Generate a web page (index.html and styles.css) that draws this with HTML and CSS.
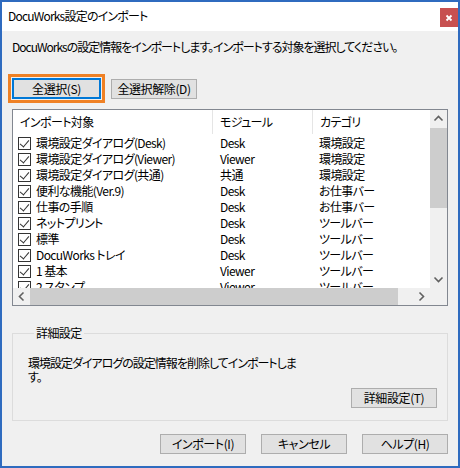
FILE: index.html
```html
<!DOCTYPE html>
<html lang="ja">
<head>
<meta charset="utf-8">
<title>DocuWorks設定のインポート</title>
<link rel="stylesheet" href="styles.css">
</head>
<body>
<div class="window">
  <div class="titlebar">
    <span class="title">DocuWorks設定のインポート</span>
    <div class="close"><svg width="18" height="19" viewBox="0 0 18 19"><path d="M6.5 7.5 L11.5 12.5 M11.5 7.5 L6.5 12.5" stroke="#fff" stroke-width="1.8" fill="none"/></svg></div>
  </div>
  <div class="client">
    <p class="desc">DocuWorksの設定情報をインポートします。インポートする対象を選択してください。</p>
    <div class="btnrow">
      <button class="btn btn-focus">全選択(S)</button>
      <button class="btn">全選択解除(D)</button>
    </div>
    <div class="listbox">
      <div class="viewport">
        <div class="lrow lhead">
          <div class="c1 hc">インポート対象</div>
          <div class="c2 hc">モジュール</div>
          <div class="c3 hc">カテゴリ</div>
        </div>
        <div class="lrow"><div class="c1"><span class="cb"></span>環境設定ダイアログ(Desk)</div><div class="c2">Desk</div><div class="c3">環境設定</div></div>
        <div class="lrow"><div class="c1"><span class="cb"></span>環境設定ダイアログ(Viewer)</div><div class="c2">Viewer</div><div class="c3">環境設定</div></div>
        <div class="lrow"><div class="c1"><span class="cb"></span>環境設定ダイアログ(共通)</div><div class="c2">共通</div><div class="c3">環境設定</div></div>
        <div class="lrow"><div class="c1"><span class="cb"></span>便利な機能(Ver.9)</div><div class="c2">Desk</div><div class="c3">お仕事バー</div></div>
        <div class="lrow"><div class="c1"><span class="cb"></span>仕事の手順</div><div class="c2">Desk</div><div class="c3">お仕事バー</div></div>
        <div class="lrow"><div class="c1"><span class="cb"></span>ネットプリント</div><div class="c2">Desk</div><div class="c3">ツールバー</div></div>
        <div class="lrow"><div class="c1"><span class="cb"></span>標準</div><div class="c2">Desk</div><div class="c3">ツールバー</div></div>
        <div class="lrow"><div class="c1"><span class="cb"></span>DocuWorks トレイ</div><div class="c2">Desk</div><div class="c3">ツールバー</div></div>
        <div class="lrow"><div class="c1"><span class="cb"></span>1 基本</div><div class="c2">Viewer</div><div class="c3">ツールバー</div></div>
        <div class="lrow"><div class="c1"><span class="cb"></span>2 スタンプ</div><div class="c2">Viewer</div><div class="c3">ツールバー</div></div>
      </div>
      <div class="vscroll">
        <div class="arrow"><svg width="17" height="17" viewBox="0 0 17 17"><path d="M4.5 10.5 L8.5 6.5 L12.5 10.5" stroke="#606060" stroke-width="1.6" fill="none"/></svg></div>
        <div class="vthumb"></div>
        <div class="vtrack"></div>
        <div class="arrow"><svg width="17" height="17" viewBox="0 0 17 17"><path d="M4.5 6.5 L8.5 10.5 L12.5 6.5" stroke="#606060" stroke-width="1.6" fill="none"/></svg></div>
      </div>
      <div class="hscroll">
        <div class="arrow"><svg width="17" height="17" viewBox="0 0 17 17"><path d="M10.5 4.5 L6.5 8.5 L10.5 12.5" stroke="#606060" stroke-width="1.6" fill="none"/></svg></div>
        <div class="hthumb"></div>
        <div class="htrack"></div>
        <div class="arrow"><svg width="17" height="17" viewBox="0 0 17 17"><path d="M6.5 4.5 L10.5 8.5 L6.5 12.5" stroke="#606060" stroke-width="1.6" fill="none"/></svg></div>
      </div>
      <div class="corner"></div>
    </div>
    <fieldset class="group">
      <legend>詳細設定</legend>
      <p class="gtext">環境設定ダイアログの設定情報を削除してインポートしま<br>す。</p>
      <div class="gactions"><button class="btn">詳細設定(T)</button></div>
    </fieldset>
    <div class="footer">
      <button class="btn">インポート(I)</button>
      <button class="btn">キャンセル</button>
      <button class="btn">ヘルプ(H)</button>
    </div>
  </div>
</div>
</body>
</html>
```
FILE: styles.css
```css
* { box-sizing: border-box; }
html, body { margin: 0; padding: 0; background: #f0f0f0; }
body {
  font-family: "Noto Sans CJK JP", "Noto Sans", sans-serif;
  font-size: 12px;
  color: #000;
  font-feature-settings: "palt";
}
.window {
  width: 460px;
  height: 468px;
  border: 2px solid #2f6bbf;
  background: #f0f0f0;
  display: flex;
  flex-direction: column;
}
.titlebar {
  height: 29px;
  background: #fff;
  display: flex;
  align-items: flex-start;
  justify-content: space-between;
  padding-left: 6px;
}
.title { line-height: 16px; margin-top: 6px; font-size: 12px; letter-spacing: -0.8px; }
.close {
  width: 18px;
  height: 19px;
  margin-top: 6px;
  background: #c75050;
  display: flex;
}
.client { padding: 8px 10px 0 10px; flex: 1; }
.desc { margin: 0; line-height: 16px; letter-spacing: -1px; }
.btnrow {
  display: flex;
  align-items: flex-start;
  gap: 10px;
  margin-top: 23px;
  height: 31px;
}
.btn {
  font: inherit;
  font-feature-settings: "palt";
  letter-spacing: -0.4px;
  color: #000;
  background: #e1e1e1;
  border: 1px solid #adadad;
  width: 86px;
  height: 20px;
  padding: 0;
  line-height: 16px;
  border-radius: 0;
}
.btn-focus {
  width: 89px;
  height: 21px;
  border: 2px solid #0078d7;
  outline: 3px solid #ef8125;
  outline-offset: 1px;
}
.btnrow .btn:not(.btn-focus) { margin-top: 1px; }
.listbox {
  width: 436px;
  height: 197px;
  border: 1px solid #828790;
  background: #fff;
  display: grid;
  grid-template-columns: 417px 17px;
  grid-template-rows: 178px 17px;
}
.viewport { overflow: hidden; background: #fff; letter-spacing: -0.6px; }
.lrow { display: flex; height: 16px; line-height: 16px; white-space: nowrap; }
.lhead { height: 24px; line-height: 24px; margin-bottom: 1px; }
.c1 { width: 200px; padding-left: 5px; display: flex; align-items: center; }
.c2 { width: 100px; padding-left: 7px; }
.c3 { width: 117px; padding-left: 6px; }
.hc { padding-left: 7px; border-right: 1px solid #e5e5e5; }
.lhead .c1 { padding-left: 7px; }
.lhead .c3 { border-right: none; }
.cb {
  width: 13px;
  height: 13px;
  border: 1px solid #333;
  background: #fff;
  margin-right: 5px;
  position: relative;
  flex: none;
}
.cb::after {
  content: "";
  position: absolute;
  left: 3px;
  top: 0px;
  width: 4px;
  height: 8px;
  border-right: 1.3px solid #333;
  border-bottom: 1.3px solid #333;
  transform: rotate(40deg);
}
.vscroll { background: #f0f0f0; display: flex; flex-direction: column; }
.arrow { width: 17px; height: 17px; flex: none; display: flex; }
.vthumb { height: 80px; background: #cdcdcd; margin-top: 1px; flex: none; }
.vtrack { flex: 1; }
.hscroll { background: #f0f0f0; display: flex; }
.hthumb { width: 368px; background: #cdcdcd; flex: none; }
.htrack { flex: 1; }
.corner { background: #f0f0f0; }
.group {
  margin: 19px 0 0 0;
  padding: 15px 10px 12px 15px;
  border: 1px solid #dcdcdc;
  width: 436px;
  min-width: 0;
}
.group legend { padding: 0 2px; margin-left: 6px; line-height: 16px; letter-spacing: -0.6px; }
.gtext { margin: 0; line-height: 14px; letter-spacing: -1px; }
.gactions { display: flex; justify-content: flex-end; margin-top: 4px; }
.footer {
  display: flex;
  justify-content: flex-end;
  gap: 15px;
  margin-top: 13px;
}
```
